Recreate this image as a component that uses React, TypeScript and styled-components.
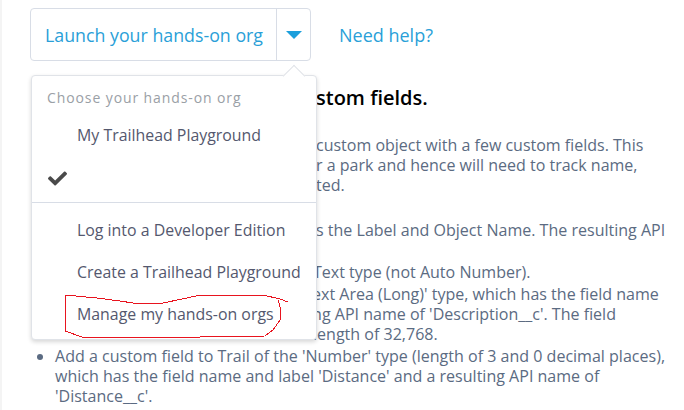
import styled, { createGlobalStyle } from "styled-components";
import { FaCheck } from "react-icons/fa";

const GlobalStyle = createGlobalStyle`
  html, body {
    margin: 0;
    background: #fff;
    overflow: hidden;
  }
  #root {
    height: 410px;
  }
`;

const Page = styled.div`
  position: relative;
  width: 684px;
  height: 410px;
  box-sizing: border-box;
  padding-left: 2px;
  overflow: hidden;
  font-family: "Open Sans", "Noto Sans", sans-serif;
  color: #5b6b82;
`;

const Edge = styled.div`
  position: absolute;
  left: 0;
  top: 0;
  bottom: 0;
  width: 2px;
  background: #f4f4f4;
`;

const Toolbar = styled.div`
  display: flex;
  align-items: center;
  padding: 8px 0 0 28px;
`;

const LaunchGroup = styled.div`
  display: flex;
  width: 281px;
  height: 53px;
  box-sizing: border-box;
  border: 1px solid #d8dde6;
  border-radius: 4px;
`;

const LaunchLabel = styled.div`
  flex: 1;
  display: flex;
  align-items: center;
  padding-left: 14px;
  font-size: 17.8px;
  color: #2a9fd8;
  white-space: nowrap;
`;

const Caret = styled.div`
  width: 33px;
  display: flex;
  align-items: center;
  justify-content: center;
  border-left: 1px solid #d8dde6;
  &::after {
    content: "";
    border-left: 8px solid transparent;
    border-right: 8px solid transparent;
    border-top: 8px solid #1c9fdc;
  }
`;

const HelpLink = styled.div`
  margin-left: 28px;
  font-size: 18px;
  color: #2a9fd8;
`;

const Article = styled.div`
  padding: 25px 0 0 28px;
`;

const Heading = styled.div`
  font-size: 20px;
  line-height: 24px;
  font-weight: 600;
  color: #000;
  white-space: nowrap;
  padding-left: 286px;
`;

const Para = styled.div`
  font-size: 16px;
  line-height: 20px;
  margin-top: 25px;
  white-space: nowrap;
`;

const Steps = styled.ul`
  margin: 25px 0 0;
  padding: 0 0 0 25px;
  font-size: 16.05px;
  line-height: 20px;
  white-space: nowrap;
  list-style: disc;
  li {
    margin-bottom: 2px;
  }
`;

const Tail = styled.div<{ $inset: number }>`
  padding-left: ${(p) => p.$inset}px;
  height: 20px;
`;

const Menu = styled.div`
  position: absolute;
  left: 31px;
  top: 75px;
  width: 286px;
  height: 265px;
  box-sizing: border-box;
  background: #fff;
  border: 1px solid #e0e3e8;
  border-radius: 4px;
  box-shadow: 0 2px 4px rgba(0, 0, 0, 0.16);
  &::before {
    content: "";
    position: absolute;
    left: 254px;
    top: -8px;
    width: 15px;
    height: 15px;
    background: #fff;
    border-left: 1px solid #e0e3e8;
    border-top: 1px solid #e0e3e8;
    transform: rotate(45deg);
  }
`;

const MenuTitle = styled.div`
  position: relative;
  box-sizing: border-box;
  padding: 13px 0 0 15px;
  height: 38px;
  font-size: 14px;
  line-height: 18px;
  letter-spacing: 0.9px;
  color: #9aa0a6;
`;

const MenuItem = styled.div`
  padding-left: 45px;
  height: 42px;
  display: flex;
  align-items: center;
  font-size: 15.9px;
  color: #54586e;
  white-space: nowrap;
`;

const CheckRow = styled.div`
  height: 44px;
  padding-left: 16px;
  display: flex;
  align-items: center;
  color: #4a4a4a;
  font-size: 19px;
`;

const Divider = styled.div`
  height: 1px;
  background: #d8dde6;
  margin: 2px 0 6px;
`;

const Scribble = styled.svg`
  position: absolute;
  left: 0;
  top: 0;
`;

const App = () => {
  return (
    <Page>
      <GlobalStyle />
      <Edge />
      <Toolbar>
        <LaunchGroup>
          <LaunchLabel>Launch your hands-on org</LaunchLabel>
          <Caret />
        </LaunchGroup>
        <HelpLink>Need help?</HelpLink>
      </Toolbar>
      <Article>
        <Heading>stom fields.</Heading>
        <Para>
          <Tail $inset={286}>custom object with a few custom fields. This</Tail>
          <Tail $inset={286}>r a park and hence will need to track name,</Tail>
          <Tail $inset={286}>ted.</Tail>
        </Para>
        <Steps>
          <li>
            <Tail $inset={261}>s the Label and Object Name. The resulting API</Tail>
            <Tail $inset={0}>&nbsp;</Tail>
          </li>
          <li>
            <Tail $inset={258}>Text type (not Auto Number).</Tail>
          </li>
          <li>
            <Tail $inset={257}>ext Area (Long)' type, which has the field name</Tail>
            <Tail $inset={253}>ing API name of 'Description__c'. The field</Tail>
            <Tail $inset={258}>length of 32,768.</Tail>
          </li>
          <li>
            Add a custom field to Trail of the 'Number' type (length of 3 and 0 decimal places),
            <br />
            which has the field name and label 'Distance' and a resulting API name of
            <br />
            'Distance__c'.
          </li>
        </Steps>
      </Article>
      <Menu>
        <MenuTitle>Choose your hands-on org</MenuTitle>
        <MenuItem>My Trailhead Playground</MenuItem>
        <CheckRow>
          <FaCheck />
        </CheckRow>
        <Divider />
        <MenuItem>Log into a Developer Edition</MenuItem>
        <MenuItem>Create a Trailhead Playground</MenuItem>
        <MenuItem>Manage my hands-on orgs</MenuItem>
      </Menu>
      <Scribble width="684" height="410" viewBox="0 0 684 410" shapeRendering="crispEdges">
        <path
          d="M288 302 L280 299 L263 295 L200 295 L187 298 L163 303 L133 303 L120 301 L97 298 L65 295 L65 331 L82 337 L200 337 L265 336 L273 330 L280 320 L281 310 L278 300"
          fill="none"
          stroke="#e8141f"
          strokeWidth="1"
        />
      </Scribble>
    </Page>
  );
};

export default App;
